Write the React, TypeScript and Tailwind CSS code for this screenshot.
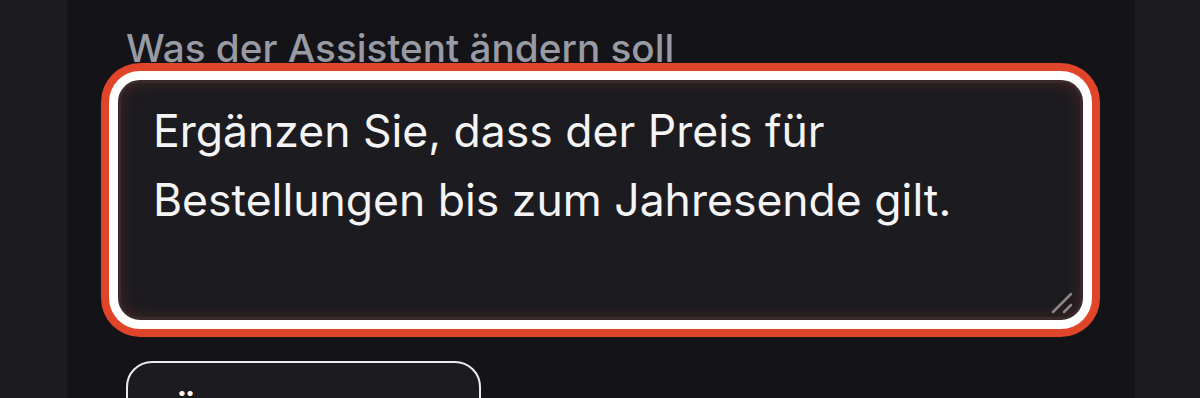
import { useState } from 'react';

export default function App() {
  const [text, setText] = useState(
    'Ergänzen Sie, dass der Preis für Bestellungen bis zum Jahresende gilt.'
  );

  return (
    <div className="flex h-[398px] w-full overflow-hidden bg-[#1c1b20] font-['Inter',sans-serif]">
      <div className="ml-[67px] w-[1068px] bg-[#141317] pl-[59px] pt-[27px]">
        <label className="block text-[38.7px] font-medium leading-[42px] text-[#989ba4]">
          Was der Assistent ändern soll
        </label>

        <div className="relative -ml-2 mt-[11px] w-[965px]">
          <textarea
            value={text}
            onChange={(e) => setText(e.target.value)}
            className="block h-[240px] w-full resize-none rounded-[22px] border-[3px] border-[#3b2a2c] bg-[#1c1b20] pl-8 pr-[80px] pt-[14px] text-[44.5px] leading-[69px] text-[#f4f4f5] outline-none shadow-[inset_0_0_16px_rgba(200,70,50,0.22),0_0_0_9px_#ffffff,0_0_0_17px_#e0452a]"
          />
          {/* grip */}
          <svg
            className="pointer-events-none absolute bottom-[6px] right-[10px]"
            width="22"
            height="22"
            viewBox="0 0 22 22"
          >
            <line x1="2" y1="20" x2="20" y2="2" stroke="#8f8585" strokeWidth="2.5" strokeLinecap="round" />
            <line x1="13" y1="20" x2="20" y2="13" stroke="#8f8585" strokeWidth="2.5" strokeLinecap="round" />
          </svg>
        </div>

        <button className="mt-[41px] h-[100px] w-[355px] rounded-[26px] border-2 border-[#ececec] bg-[#1c1b20] pl-[44px] text-left text-[38px] font-semibold leading-[100px] text-white">
          Übernehmen
        </button>
      </div>
    </div>
  );
}
